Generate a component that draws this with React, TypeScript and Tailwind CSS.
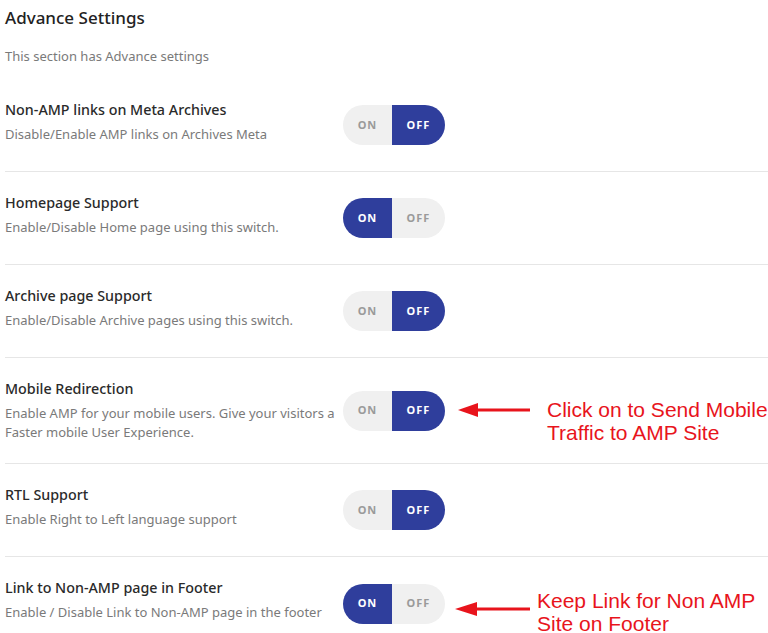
import React from "react";

type Row = {
  title: string;
  desc: string;
  on: boolean;
  note?: [string, string];
};

const rows: Row[] = [
  { title: "Non-AMP links on Meta Archives", desc: "Disable/Enable AMP links on Archives Meta", on: false },
  { title: "Homepage Support", desc: "Enable/Disable Home page using this switch.", on: true },
  { title: "Archive page Support", desc: "Enable/Disable Archive pages using this switch.", on: false },
  {
    title: "Mobile Redirection",
    desc: "Enable AMP for your mobile users. Give your visitors a Faster mobile User Experience.",
    on: false,
    note: ["Click on to Send Mobile", "Traffic to AMP Site"],
  },
  { title: "RTL Support", desc: "Enable Right to Left language support", on: false },
  {
    title: "Link to Non-AMP page in Footer",
    desc: "Enable / Disable Link to Non-AMP page in the footer",
    on: true,
    note: ["Keep Link for Non AMP", "Site on Footer"],
  },
];

function Toggle({ on }: { on: boolean }) {
  return (
    <div className="flex h-10 w-[102px] shrink-0 overflow-hidden rounded-full text-[11px] font-bold tracking-[1px]">
      <div
        className={`flex w-[49px] items-center justify-center ${
          on ? "bg-[#2f3e9c] text-white" : "bg-[#f0f0f0] text-[#9a9a9a]"
        }`}
      >
        ON
      </div>
      <div
        className={`flex flex-1 items-center justify-center ${
          on ? "bg-[#f0f0f0] text-[#9a9a9a]" : "bg-[#2f3e9c] text-white"
        }`}
      >
        OFF
      </div>
    </div>
  );
}

// red call-out arrows drawn over the screenshot
function Note({ lines, mobile }: { lines: [string, string]; mobile: boolean }) {
  return (
    <div className={`flex h-10 items-start whitespace-nowrap ${mobile ? "ml-[13px]" : "ml-[10px]"}`}>
      <svg
        width={mobile ? 72 : 75}
        height="16"
        viewBox={mobile ? "0 0 72 16" : "0 0 75 16"}
        className={mobile ? "mt-[11px]" : "mt-[17px]"}
      >
        <path d={mobile ? "M0 8 L20 1 L20 15 Z" : "M0 8 L22 1 L22 15 Z"} fill="#e8141c" />
        <rect x="18" y="6.5" width={mobile ? 54 : 57} height="3" fill="#e8141c" />
      </svg>
      <div
        className={`text-[21px] leading-[23px] text-[#e8141c] ${mobile ? "ml-[17px] mt-[7px]" : "ml-[7px] mt-[5px]"}`}
        style={{ fontFamily: '"Liberation Sans", Arial, sans-serif' }}
      >
        <div>{lines[0]}</div>
        <div>{lines[1]}</div>
      </div>
    </div>
  );
}

export default function App() {
  return (
    <div
      className="h-[633px] w-[768px] overflow-hidden bg-white pl-[5px]"
      style={{ fontFamily: '"Noto Sans", "Open Sans", sans-serif' }}
    >
      <h1 className="pt-[5px] text-[17px] leading-[26px] font-medium text-[#222]">Advance Settings</h1>
      <p className="mt-[16px] text-[13px] leading-[18px] text-[#7a7a7a]">This section has Advance settings</p>

      <div className="mt-[14px]">
        {rows.map((row, i) => (
          <div
            key={row.title}
            className={`flex min-h-[93px] items-center py-[21px] ${i < rows.length - 1 ? "border-b border-[#e6e6e6]" : ""}`}
          >
            <div className="w-[338px] shrink-0 self-start">
              <div className="text-[14.3px] leading-[20px] font-medium text-[#2a2a2a]">{row.title}</div>
              <div className="mt-[5px] text-[13px] leading-[19px] text-[#7a7a7a]">{row.desc}</div>
            </div>
            <Toggle on={row.on} />
            {row.note && <Note lines={row.note} mobile={i === 3} />}
          </div>
        ))}
      </div>
    </div>
  );
}
